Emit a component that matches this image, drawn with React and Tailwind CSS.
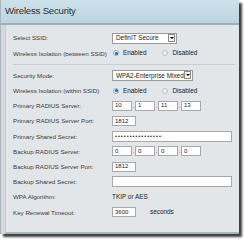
import React from "react";

const F = { fontFamily: '"Liberation Sans", Arial, sans-serif' };

function Row({ label, children }) {
  return (
    <div className="flex h-[15.2px] items-center">
      <div className="w-[99px] shrink-0 text-[6.2px] text-[#3a3a3a] whitespace-nowrap">{label}</div>
      <div className="flex items-center text-[6.4px] text-[#222]">{children}</div>
    </div>
  );
}

function Select({ w, text }) {
  return (
    <div className={`flex h-[11px] items-center border border-[#9a9a9a] bg-white ${w}`}>
      <div className="flex-1 pl-[3px] text-[6.4px] whitespace-nowrap overflow-hidden">{text}</div>
      <div className="mr-[1px] flex h-[8px] w-[7px] items-center justify-center border border-[#8a8a8a] bg-[#f2f2f2]">
        <div className="h-0 w-0 border-l-[2px] border-r-[2px] border-t-[2.5px] border-l-transparent border-r-transparent border-t-black" />
      </div>
    </div>
  );
}

function Radio({ on }) {
  return on ? (
    <div className="flex h-[6px] w-[6px] items-center justify-center rounded-full border border-[#8fb3cc] bg-[#dceaf4]">
      <div className="h-[3px] w-[3px] rounded-full bg-[#1f6fae]" />
    </div>
  ) : (
    <div className="h-[6px] w-[6px] rounded-full border border-[#b8c0c4] bg-[#eef0f1]" />
  );
}

function Radios() {
  return (
    <div className="flex items-center">
      <div className="ml-[1px]"><Radio on /></div>
      <span className="ml-[4px] text-[6.4px]">Enabled</span>
      <div className="ml-[16px]"><Radio /></div>
      <span className="ml-[4px] text-[6.4px]">Disabled</span>
    </div>
  );
}

function Box({ w, children }) {
  return (
    <div className={`flex h-[10px] items-center border border-[#a8a8a8] bg-white pl-[2px] text-[6px] ${w}`}>
      {children}
    </div>
  );
}

function Ip({ parts }) {
  return (
    <div className="flex items-center">
      {parts.map((p, i) => (
        <React.Fragment key={i}>
          {i > 0 && <span className="w-[3px] text-center text-[6px] leading-none">.</span>}
          <Box w="w-[20px]">{p}</Box>
        </React.Fragment>
      ))}
    </div>
  );
}

export default function App() {
  return (
    <div className="h-[241px] w-[244px] bg-white" style={F}>
      <div className="flex h-[234px] w-[239px] flex-col border-l border-[#aab6bc] shadow-[3px_3px_2px_rgba(0,0,0,0.75)]">
        <div className="flex h-[25px] shrink-0 items-center border-b-2 border-[#9cb0bb] bg-gradient-to-b from-[#cde1ea] to-[#bdd5e0] pl-[4px]">
          <span className="text-[9.6px] tracking-[-0.2px] text-[#2f2f2f]">Wireless Security</span>
        </div>
        <div className="flex flex-1 bg-[#d3d9dc]">
          <div className="flex flex-1 flex-col ml-[4px] border-l border-[#c3cbcf] border-b-2 border-b-[#a9b7bf] bg-[#e2e6e8] pl-[7px] pt-[5.5px]">
            <Row label="Select SSID:">
              <Select w="w-[65px]" text="DefinIT Secure" />
            </Row>
            <Row label="Wireless Isolation (between SSID)">
              <Radios />
            </Row>
            <div className="my-[3px] mr-[4px] h-px bg-[#c9cfd2]" />
            <Row label="Security Mode:">
              <Select w="w-[81px]" text="WPA2-Enterprise Mixed" />
            </Row>
            <Row label="Wireless Isolation (within SSID)">
              <Radios />
            </Row>
            <Row label="Primary RADIUS Server:">
              <Ip parts={["10", "1", "11", "13"]} />
            </Row>
            <Row label="Primary RADIUS Server Port:">
              <Box w="w-[24px]">1812</Box>
            </Row>
            <Row label="Primary Shared Secret:">
              <div className="flex h-[11px] w-[120px] items-center border border-[#a8a8a8] bg-white pl-[2px] text-[5.5px] tracking-[1px]">
                ••••••••••••••••
              </div>
            </Row>
            <Row label="Backup RADIUS Server:">
              <Ip parts={["0", "0", "0", "0"]} />
            </Row>
            <Row label="Backup RADIUS Server Port:">
              <Box w="w-[24px]">1812</Box>
            </Row>
            <Row label="Backup Shared Secret:">
              <div className="h-[11px] w-[120px] border border-[#a8a8a8] bg-white" />
            </Row>
            <Row label="WPA Algorithm:">
              <span className="text-[6.4px]">TKIP or AES</span>
            </Row>
            <Row label="Key Renewal Timeout:">
              <Box w="w-[24px]">3600</Box>
              <span className="ml-[14px] text-[6.4px]">seconds</span>
            </Row>
          </div>
        </div>
      </div>
    </div>
  );
}
